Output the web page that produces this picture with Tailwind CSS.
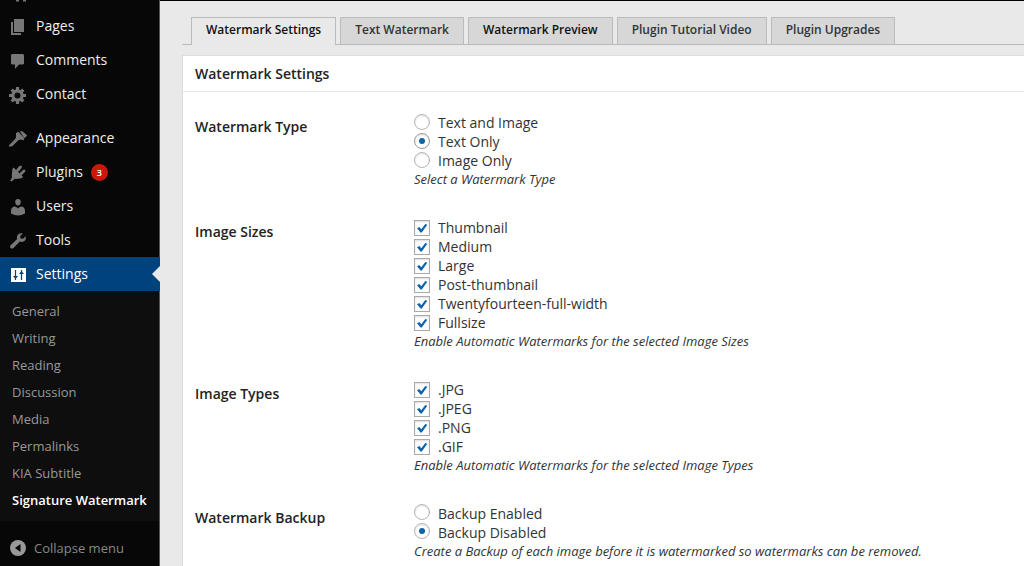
<!DOCTYPE html>
<html lang="en">
<head>
  <meta charset="UTF-8" />
  <title>Signature Watermark</title>
  <meta name="viewport" content="width=device-width, initial-scale=1.0" />
  <script src="https://cdn.jsdelivr.net/npm/@tailwindcss/browser@4"></script>
</head>
<body class="bg-[#e9e9e9] font-['Open_Sans',sans-serif] text-[#333] flex min-h-screen overflow-x-hidden">

  <!-- Admin menu -->
  <nav class="w-40 shrink-0 bg-[#070707] border-r border-[#555] text-sm text-[#eee]">
    <svg class="ml-4 h-[9px] w-4" viewBox="0 0 16 9" fill="#777"><path d="M0 0h3v1.500H0zM7 0h3v1.500H7z" /></svg>

    <a href="#" class="flex items-center h-[34px] gap-2 pl-2">
      <svg class="w-5 h-5" viewBox="0 0 20 20" fill="#777"><path d="M6 3h10v13H6zM3 6h2v11h8v2H3z" /></svg>
      Pages
    </a>
    <a href="#" class="flex items-center h-[34px] gap-2 pl-2">
      <svg class="w-5 h-5" viewBox="0 0 20 20" fill="#777"><path d="M4 4h11l1 1v8.500l-1 1h-4L7 19v-4.500H4l-1-1V5z" /></svg>
      Comments
    </a>
    <a href="#" class="flex items-center h-[34px] gap-2 pl-2">
      <svg class="w-5 h-5" viewBox="0 0 20 20" fill="none" stroke="#777"><circle cx="9.500" cy="11.500" r="4.600" stroke-width="3.200" /><path d="M9.500 3v3M9.500 17v3M1 11.500h3M15 11.500h3M3.700 5.700l2 2M13.300 15.300l2 2M3.700 17.300l2-2M13.300 7.700l2-2" stroke-width="3.200" /></svg>
      Contact
    </a>

    <a href="#" class="mt-[10px] flex items-center h-[34px] gap-2 pl-2">
      <svg class="w-5 h-5" viewBox="0 0 20 20" fill="#777"><path d="M12 3.500 14 3l5 4.300-1 1.700-2 1zM8 5l2.500-1.200 6 7-1.200 1.400-3-.8-2.300 1-1 1L4.500 18 1.500 18.800.8 17.500l5.700-5.800L8 9.500z" /></svg>
      Appearance
    </a>
    <a href="#" class="flex items-center h-[34px] gap-2 pl-2">
      <svg class="w-5 h-5" viewBox="0 0 20 20" fill="#777"><path d="M5.500 5.500 15 14.800l-1.200 1.400-5.300.8-1.700-.2L3.500 19.500 2.200 18.500l1.800-3-.2-2.200.6-6.300z" /><path d="M9.500 8.500l3-3.500M12.800 12l3.200-3" stroke="#777" stroke-width="2.800" stroke-linecap="round" /></svg>
      Plugins
      <span class="size-[17px] rounded-full bg-[#c9190b] text-white text-[9px] leading-[17px] font-semibold text-center">3</span>
    </a>
    <a href="#" class="flex items-center h-[34px] gap-2 pl-2">
      <svg class="w-5 h-5" viewBox="0 0 20 20" fill="#777"><path d="M10 3c2 0 3 1.500 2.800 3.300C12.600 8.300 11.500 9.600 10 9.600S7.400 8.300 7.200 6.300C7 4.500 8 3 10 3zM6.500 10.500q1.800.2 3.500 2 1.700-1.800 3.500-2c2.300.5 3.500 2 3.500 4.500v2.500q-3.500 2-7 2t-7-2V15c0-2.500 1.200-4 3.500-4.500z" /></svg>
      Users
    </a>
    <a href="#" class="flex items-center h-[34px] gap-2 pl-2">
      <svg class="w-5 h-5" viewBox="0 0 20 20" fill="#777"><path d="M14.800 3.500 12.200 6l.4 2.400 2.400.4 2.600-2.600c.8 2.500-.2 4.600-2 5.400-1.300.6-2.600.5-3.800 0L5.500 18c-2 1.600-4.500-.6-2.900-2.700l6.600-6.200c-.5-1.300-.5-2.500.2-3.700 1-1.700 3.100-2.600 5.400-1.900z" /></svg>
      Tools
    </a>
    <a href="#" class="relative -mr-px flex items-center h-[34px] gap-2 pl-2 bg-[#00427c] text-white">
      <svg class="w-5 h-5" viewBox="0 0 20 20"><path d="M3 4h15v14H3z" fill="#fff" /><path d="M7.500 6v10M13.500 6v10" stroke="#00427c" stroke-width="1.200" /><path d="M5 12h5l-2.500 3zM11 10h5l-2.500-3z" fill="#00427c" /></svg>
      Settings
      <svg class="absolute right-0 top-[9px] w-2 h-4" viewBox="0 0 8 16" fill="#e9e9e9"><path d="M8 0v16L0 8z" /></svg>
    </a>

    <ul class="bg-[#0e0e0e] py-[7px] pl-3 text-[13px] leading-[27px] text-[#999] whitespace-nowrap">
      <li><a href="#">General</a></li>
      <li><a href="#">Writing</a></li>
      <li><a href="#">Reading</a></li>
      <li><a href="#">Discussion</a></li>
      <li><a href="#">Media</a></li>
      <li><a href="#">Permalinks</a></li>
      <li><a href="#">KIA Subtitle</a></li>
      <li><a href="#" class="font-semibold text-white">Signature Watermark</a></li>
    </ul>

    <button type="button" class="mt-[10px] flex items-center h-[34px] gap-2 pl-[10px] text-[13px] text-[#888]">
      <svg class="w-4 h-4" viewBox="0 0 16 16"><circle cx="8" cy="8" r="8" fill="#999" /><path d="M10.500 4v8L5 8z" fill="#070707" /></svg>
      Collapse menu
    </button>
  </nav>

  <main class="flex-1 min-w-0 flex flex-col border-t border-black pl-[22px]">
    <!-- Tabs -->
    <div class="mt-4 flex gap-1 border-b border-[#bbb] pl-[9px] text-xs font-semibold whitespace-nowrap">
      <a href="#" class="-mb-px h-7 border border-b-0 border-[#bbb] bg-[#e9e9e9] px-[14px] leading-6 text-[#111]">Watermark Settings</a>
      <a href="#" class="h-[27px] border border-b-0 border-[#bbb] bg-[#d7d7d7] px-[14px] leading-6">Text Watermark</a>
      <a href="#" class="h-[27px] border border-b-0 border-[#bbb] bg-[#d7d7d7] px-[14px] leading-6 text-[#111]">Watermark Preview</a>
      <a href="#" class="h-[27px] border border-b-0 border-[#bbb] bg-[#d7d7d7] px-[14px] leading-6">Plugin Tutorial Video</a>
      <a href="#" class="h-[27px] border border-b-0 border-[#bbb] bg-[#d7d7d7] px-[14px] leading-6">Plugin Upgrades</a>
    </div>

    <!-- Settings box -->
    <section class="mt-[10px] flex-1 border-l border-t border-[#ddd] bg-white text-sm">
      <h3 class="h-9 border-b border-[#e8e8e8] pl-3 leading-[35px] font-semibold text-[#222]">Watermark Settings</h3>

      <form class="flex flex-col gap-[30px] pt-[21px] pl-3">
        <fieldset class="flex leading-[19px]" aria-labelledby="type">
          <div id="type" class="w-[219px] shrink-0 pt-1 font-semibold text-[#222]">Watermark Type</div>
          <div>
            <label class="flex gap-2">
              <input type="radio" name="type" class="mt-px appearance-none size-4 rounded-full border border-[#b4b4b4] bg-white shadow-[inset_0_1px_2px_#0002]" />
              Text and Image
            </label>
            <label class="flex gap-2">
              <input type="radio" name="type" checked class="mt-px appearance-none size-4 rounded-full border border-[#999] bg-white shadow-[inset_0_1px_2px_#0002] grid place-items-center before:size-[6px] before:rounded-full before:bg-[#0a66a8]" />
              Text Only
            </label>
            <label class="flex gap-2">
              <input type="radio" name="type" class="mt-px appearance-none size-4 rounded-full border border-[#b4b4b4] bg-white shadow-[inset_0_1px_2px_#0002]" />
              Image Only
            </label>
            <p class="text-[13px] leading-[18px] italic">Select a Watermark Type</p>
          </div>
        </fieldset>

        <fieldset class="flex leading-[19px]" aria-labelledby="sizes">
          <div id="sizes" class="w-[219px] shrink-0 pt-1 font-semibold text-[#222]">Image Sizes</div>
          <div>
            <div id="sizeList"></div>
            <p class="text-[13px] leading-[18px] italic">Enable Automatic Watermarks for the selected Image Sizes</p>
          </div>
        </fieldset>

        <fieldset class="flex leading-[19px]" aria-labelledby="types">
          <div id="types" class="w-[219px] shrink-0 pt-1 font-semibold text-[#222]">Image Types</div>
          <div>
            <div id="typeList"></div>
            <p class="text-[13px] leading-[18px] italic">Enable Automatic Watermarks for the selected Image Types</p>
          </div>
        </fieldset>

        <fieldset class="flex leading-[19px]" aria-labelledby="backup">
          <div id="backup" class="w-[219px] shrink-0 pt-1 font-semibold text-[#222]">Watermark Backup</div>
          <div>
            <label class="flex gap-2">
              <input type="radio" name="backup" class="appearance-none size-4 rounded-full border border-[#b4b4b4] bg-white shadow-[inset_0_1px_2px_#0002]" />
              Backup Enabled
            </label>
            <label class="flex gap-2">
              <input type="radio" name="backup" checked class="appearance-none size-4 rounded-full border border-[#b4b4b4] bg-white shadow-[inset_0_1px_2px_#0002] grid place-items-center before:size-[6px] before:rounded-full before:bg-[#0a66a8]" />
              Backup Disabled
            </label>
            <p class="text-[13px] leading-[18px] italic">Create a Backup of each image before it is watermarked so watermarks can be removed.</p>
          </div>
        </fieldset>
      </form>
    </section>
  </main>

  <script>
    // Checkbox row, the tick sits in the same grid cell as the input
    function checkbox(name, text) {
      return `<label class="flex gap-2">
        <span class="grid size-4 mt-[2px]">
          <input type="checkbox" name="${name}" checked class="peer [grid-area:1/1] appearance-none size-4 border border-[#aaa] bg-white shadow-[inset_0_1px_2px_#0002]" />
          <svg class="[grid-area:1/1] size-4 pointer-events-none invisible peer-checked:visible" viewBox="0 0 16 16" fill="#0a63ae"><path d="M3 8.200 5.300 7l2 2.200L11.300 4l2 .8L7.800 12.500H6.500z" /></svg>
        </span>
        ${text}
      </label>`;
    }

    const sizes = ["Thumbnail", "Medium", "Large", "Post-thumbnail", "Twentyfourteen-full-width", "Fullsize"];
    const types = [".JPG", ".JPEG", ".PNG", ".GIF"];

    document.getElementById("sizeList").innerHTML = sizes.map(s => checkbox("sizes", s)).join("");
    document.getElementById("typeList").innerHTML = types.map(t => checkbox("types", t)).join("");
  </script>
</body>
</html>
